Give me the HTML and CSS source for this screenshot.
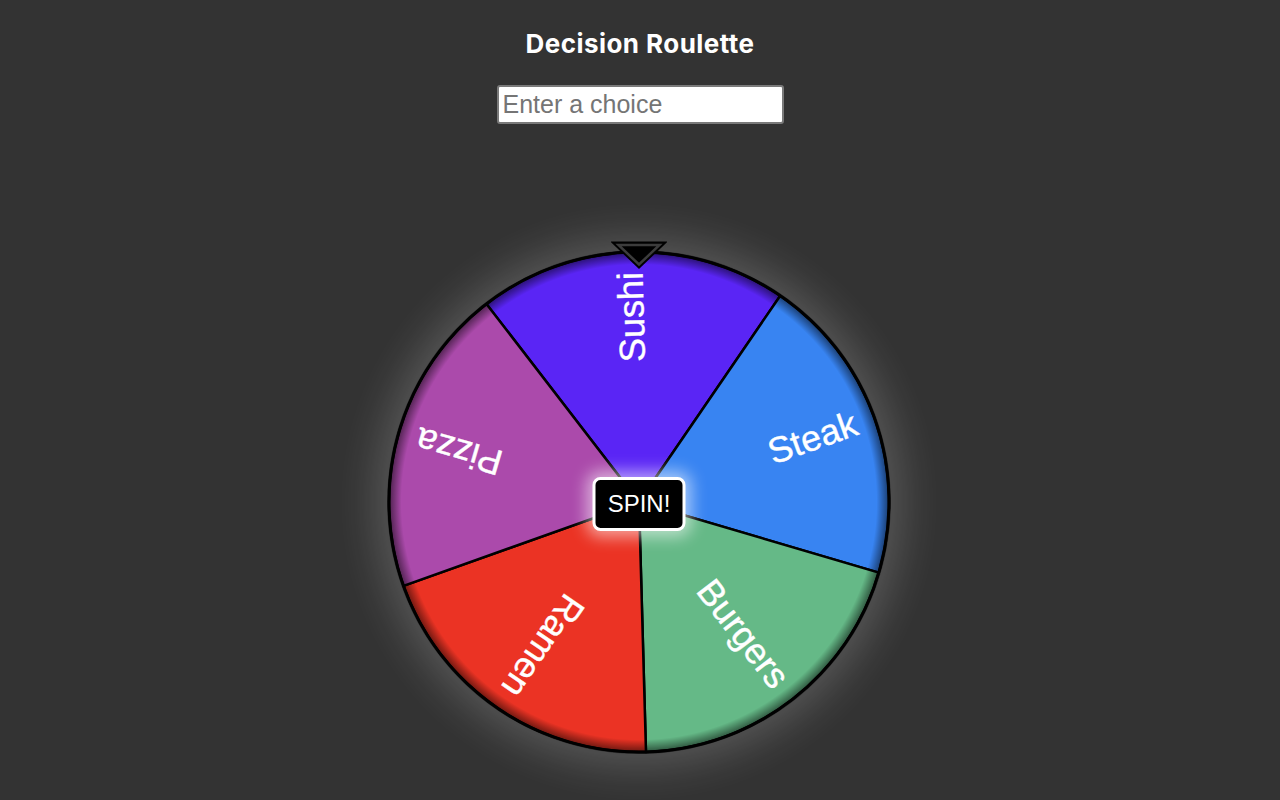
FILE: index.html
```html
<!DOCTYPE html>
<html lang="en">
<head>
<meta charset="utf-8">
<title>Decision Roulette</title>
<link rel="stylesheet" href="styles.css">
</head>
<body>
<main class="app">
  <h1 class="title">Decision Roulette</h1>
  <input class="choice-input" type="text" placeholder="Enter a choice">
  <div class="wheel-wrap">
    <div class="wheel">
      <svg class="wheel-svg" viewBox="0 0 504 504" width="504" height="504">
        <defs>
          <radialGradient id="rim" cx="252" cy="252" r="250" gradientUnits="userSpaceOnUse">
            <stop offset="0.95" stop-color="#000" stop-opacity="0"/>
            <stop offset="1" stop-color="#000" stop-opacity="0.55"/>
          </radialGradient>
        </defs>
        <g transform="rotate(-1.6 252 252)">
          <path class="seg" fill="#5a25f5" d="M252 252 L105.05 49.75 A250 250 0 0 1 398.95 49.75 Z"/>
          <path class="seg" fill="#3884f2" d="M252 252 L398.95 49.75 A250 250 0 0 1 489.77 329.25 Z"/>
          <path class="seg" fill="#65b987" d="M252 252 L489.77 329.25 A250 250 0 0 1 252 502 Z"/>
          <path class="seg" fill="#eb3324" d="M252 252 L252 502 A250 250 0 0 1 14.23 329.25 Z"/>
          <path class="seg" fill="#ab4aab" d="M252 252 L14.23 329.25 A250 250 0 0 1 105.05 49.75 Z"/>
          <circle cx="252" cy="252" r="250" fill="url(#rim)"/>
          <g class="labels">
            <text transform="translate(252 252) rotate(-90)" x="230" y="10">Sushi</text>
            <text transform="translate(252 252) rotate(-18)" x="231" y="10">Steak</text>
            <text transform="translate(252 252) rotate(54)" x="231" y="10">Burgers</text>
            <text transform="translate(252 252) rotate(126)" x="231" y="10">Ramen</text>
            <text transform="translate(252 252) rotate(198)" x="231" y="10">Pizza</text>
          </g>
          <circle cx="252" cy="252" r="250" fill="none" stroke="#000" stroke-width="3"/>
        </g>
      </svg>
    </div>
    <svg class="pointer" viewBox="0 0 56 30" width="56" height="30">
      <polygon points="3,3 53,3 28,27" fill="#000" stroke="#000" stroke-width="3" stroke-linejoin="miter"/>
      <polygon points="7.5,5 48.5,5 28,24.5" fill="#000" stroke="#3c3c3c" stroke-width="2.5" stroke-linejoin="miter"/>
    </svg>
    <button class="spin-btn" type="button">SPIN!</button>
  </div>
</main>
</body>
</html>
```

FILE: styles.css
```css
html, body {
  margin: 0;
  padding: 0;
  background: #333333;
}

body {
  font-family: "Liberation Sans", Arial, sans-serif;
  color: #fff;
}

.app {
  display: flex;
  flex-direction: column;
  align-items: center;
  min-height: 800px;
  box-sizing: border-box;
  padding-bottom: 46px;
}

.title {
  margin: 29px 0 0;
  font-family: Inter, "Liberation Sans", sans-serif;
  font-weight: 700;
  font-size: 26px;
  line-height: 30px;
  letter-spacing: 0.45px;
  color: #fff;
}

.choice-input {
  margin-top: 26px;
  box-sizing: border-box;
  width: 287px;
  height: 39px;
  padding: 0 4px;
  border: 2px solid #7a7a7a;
  border-radius: 3px;
  background: #fff;
  font-family: "Liberation Sans", Arial, sans-serif;
  font-size: 25px;
  color: #222;
  outline: none;
}

.choice-input::placeholder {
  color: #757575;
}

.wheel-wrap {
  position: relative;
  margin-top: 126px;
  margin-left: -2px;
  width: 504px;
  height: 504px;
}

.wheel {
  width: 504px;
  height: 504px;
  border-radius: 50%;
  box-shadow: 0 0 42px 12px rgba(255, 255, 255, 0.18);
}

.wheel-svg {
  display: block;
}

.seg {
  stroke: #000;
  stroke-width: 2.5;
  stroke-linejoin: round;
}

.labels text {
  font-family: "Liberation Sans", Arial, sans-serif;
  font-size: 36px;
  fill: #fff;
  text-anchor: end;
  stroke: #fff;
  stroke-width: 0.4px;
}

.pointer {
  position: absolute;
  top: -10px;
  left: 50%;
  transform: translateX(-50%);
}

.spin-btn {
  position: absolute;
  top: calc(50% + 2px);
  left: 50%;
  transform: translate(-50%, -50%);
  box-sizing: border-box;
  width: 93px;
  height: 54px;
  padding: 0;
  border: 3px solid #fff;
  border-radius: 8px;
  background: #000;
  color: #fff;
  font-family: "Liberation Sans", Arial, sans-serif;
  font-size: 24px;
  cursor: pointer;
  box-shadow: 0 0 16px 6px rgba(255, 255, 255, 0.55);
}
```
